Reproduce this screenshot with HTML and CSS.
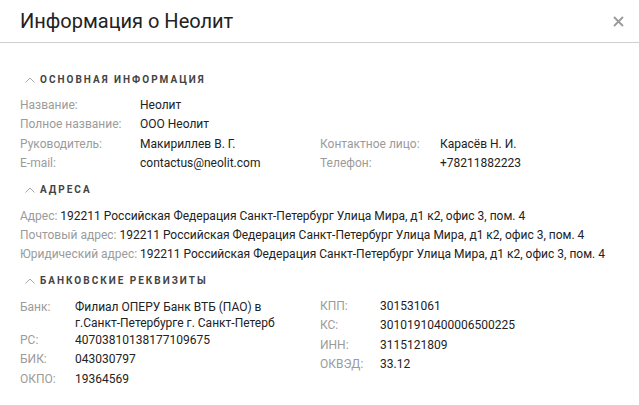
FILE: index.html
```html
<!DOCTYPE html>
<html lang="ru">
<head>
<meta charset="utf-8">
<title>Информация о Неолит</title>
<link rel="stylesheet" href="styles.css">
</head>
<body>
<div class="modal">
  <header class="modal-head">
    <h1 class="modal-title">Информация о Неолит</h1>
    <button class="close" type="button" aria-label="Закрыть">
      <svg width="11" height="11" viewBox="0 0 11 11"><path d="M1 1 L10 10 M10 1 L1 10" stroke="#9a9a9a" stroke-width="1.8" fill="none"/></svg>
    </button>
  </header>
  <div class="modal-body">
    <section class="sec">
      <h2 class="sec-title"><svg class="chev" width="10" height="6" viewBox="0 0 10 6"><polyline points="0.5,5.5 5,1 9.5,5.5" fill="none" stroke="#a8a8a8" stroke-width="1"/></svg>ОСНОВНАЯ ИНФОРМАЦИЯ</h2>
      <div class="grid-main">
        <div class="lbl">Название:</div><div class="val">Неолит</div><div></div><div></div>
        <div class="lbl">Полное название:</div><div class="val">ООО Неолит</div><div></div><div></div>
        <div class="lbl">Руководитель:</div><div class="val">Макириллев В. Г.</div><div class="lbl">Контактное лицо:</div><div class="val">Карасёв Н. И.</div>
        <div class="lbl">E-mail:</div><div class="val">contactus@neolit.com</div><div class="lbl">Телефон:</div><div class="val">+78211882223</div>
      </div>
    </section>
    <section class="sec">
      <h2 class="sec-title"><svg class="chev" width="10" height="6" viewBox="0 0 10 6"><polyline points="0.5,5.5 5,1 9.5,5.5" fill="none" stroke="#a8a8a8" stroke-width="1"/></svg>АДРЕСА</h2>
      <div class="addr"><span class="lbl">Адрес:</span> <span class="val">192211 Российская Федерация Санкт-Петербург Улица Мира, д1 к2, офис 3, пом. 4</span></div>
      <div class="addr"><span class="lbl">Почтовый адрес:</span> <span class="val">192211 Российская Федерация Санкт-Петербург Улица Мира, д1 к2, офис 3, пом. 4</span></div>
      <div class="addr"><span class="lbl">Юридический адрес:</span> <span class="val">192211 Российская Федерация Санкт-Петербург Улица Мира, д1 к2, офис 3, пом. 4</span></div>
    </section>
    <section class="sec">
      <h2 class="sec-title"><svg class="chev" width="10" height="6" viewBox="0 0 10 6"><polyline points="0.5,5.5 5,1 9.5,5.5" fill="none" stroke="#a8a8a8" stroke-width="1"/></svg>БАНКОВСКИЕ РЕКВИЗИТЫ</h2>
      <div class="bank">
        <div class="bank-left">
          <div class="lbl">Банк:</div><div class="val val-multi">Филиал ОПЕРУ Банк ВТБ (ПАО) в<br>г.Санкт-Петербурге г. Санкт-Петерб</div>
          <div class="lbl">РС:</div><div class="val">40703810138177109675</div>
          <div class="lbl">БИК:</div><div class="val">043030797</div>
          <div class="lbl">ОКПО:</div><div class="val">19364569</div>
        </div>
        <div class="bank-right">
          <div class="lbl">КПП:</div><div class="val">301531061</div>
          <div class="lbl">КС:</div><div class="val">30101910400006500225</div>
          <div class="lbl">ИНН:</div><div class="val">3115121809</div>
          <div class="lbl">ОКВЭД:</div><div class="val">33.12</div>
        </div>
      </div>
    </section>
  </div>
</div>
</body>
</html>
```
FILE: styles.css
```css
html, body {
  margin: 0;
  padding: 0;
  background: #fff;
}
body {
  font-family: Roboto, "Liberation Sans", Arial, sans-serif;
  color: #222;
  font-size: 12px;
}
.modal-head {
  display: flex;
  align-items: center;
  justify-content: space-between;
  height: 42px;
  padding: 0 15px 0 20px;
  border-bottom: 1px solid #cfcfcf;
}
.modal-title {
  margin: 0;
  font-size: 20px;
  font-weight: 400;
  line-height: 42px;
  color: #222;
}
.close {
  display: flex;
  width: 11px;
  height: 11px;
  padding: 0;
  border: 0;
  background: none;
  cursor: pointer;
}
.modal-body {
  padding: 30.6px 20px 0 20px;
}
.sec + .sec {
  margin-top: 10.8px;
}
.sec-title {
  display: flex;
  align-items: center;
  gap: 5px;
  margin: 0 0 10.5px;
  padding-left: 5px;
  font-size: 10px;
  font-weight: 700;
  line-height: 12px;
  letter-spacing: 2px;
  color: #444;
}
.chev {
  display: block;
  flex: none;
}
.lbl {
  color: #9b9b9b;
}
.val {
  color: #222;
}
.grid-main {
  display: grid;
  grid-template-columns: 120px 180px 120px 1fr;
  line-height: 19.33px;
}
.addr {
  line-height: 19.33px;
  white-space: nowrap;
}
.bank {
  display: flex;
}
.bank-left {
  width: 300px;
  display: grid;
  grid-template-columns: 55px 1fr;
  align-items: baseline;
  line-height: 19.33px;
}
.bank-right {
  flex: 1;
  display: grid;
  grid-template-columns: 60px 1fr;
  align-content: start;
  line-height: 19.33px;
  margin-top: -1px;
}
.val-multi {
  line-height: 16px;
}
```
